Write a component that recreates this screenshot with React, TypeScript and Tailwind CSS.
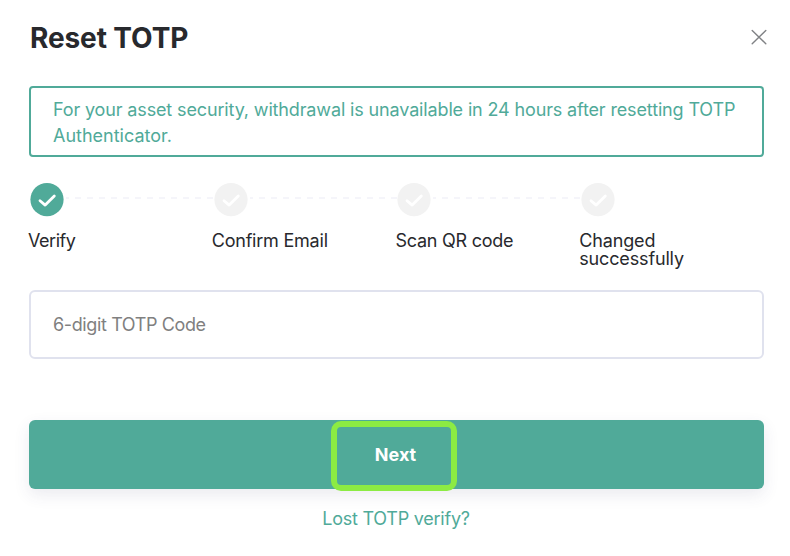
const steps = [
    { label: "Verify", done: true, className: "tracking-[-0.45px]" },
    { label: "Confirm Email", done: false, className: "tracking-[-0.22px]" },
    { label: "Scan QR code", done: false, className: "tracking-[-0.25px]" },
    { label: "Changed successfully", done: false, className: "tracking-[-0.15px]" },
];

function CheckCircle({ done }: { done: boolean }) {
    return (
        <svg
            viewBox="0 0 34 34"
            className={done ? "size-[34px] shrink-0 text-[#50aa99]" : "size-[34px] shrink-0 text-[#f2f2f2]"}
            fill="none"
        >
            <circle cx="17" cy="16.6" r="16.6" fill="currentColor" />
            <path
                d="M10 17.7 15.2 22.1 24.3 12.9"
                stroke="white"
                strokeWidth="2.8"
                strokeLinecap="round"
                strokeLinejoin="round"
            />
        </svg>
    );
}

export default function App() {
    return (
        <div className="h-[556px] w-[790px] overflow-hidden bg-white pl-[29px] pr-[26px] font-[Inter,sans-serif] text-[18px] text-[#28292d]">
            <div className="flex h-[86px] justify-between">
                <h1 className="mt-[18px] whitespace-nowrap pl-px text-[28px] font-bold leading-10 tracking-[-0.1px]">Reset TOTP</h1>
                <button className="mt-[29px] -mr-[3px] size-4" aria-label="Close">
                    <svg viewBox="0 0 16 16" fill="none" stroke="#808285" strokeWidth="1.4" strokeLinecap="round">
                        <path d="M1.2 1.4 14.8 14.8M14.8 1.4 1.2 14.8" />
                    </svg>
                </button>
            </div>

            <div className="h-[71px] whitespace-nowrap rounded-[4px] border-2 border-[#50aa99] pl-[22px] pt-[9px] leading-[26px] text-[#50aa99]">
                <p className="tracking-[-0.14px]">For your asset security, withdrawal is unavailable in 24 hours after resetting TOTP</p>
                <p>Authenticator.</p>
            </div>

            {/* Steps */}
            <div className="flex h-[133px] pt-[26px]">
                {steps.map((step, i) => (
                    <div key={step.label} className="flex-1">
                        <div className="flex h-[34px] items-center pl-[0.8px]">
                            <CheckCircle done={step.done} />
                            {i < steps.length - 1 && (
                                <div className="-mt-[4px] ml-[2.2px] h-0.5 flex-1 bg-[repeating-linear-gradient(90deg,#f5f5fa_0,#f5f5fa_3px,transparent_3px,transparent_9px,#f5f5fa_9px,#f5f5fa_12px)]" />
                            )}
                        </div>
                        <p className={`mt-[15px] w-[120px] -ml-px leading-[18px] ${step.className}`}>{step.label}</p>
                    </div>
                ))}
            </div>

            <input
                className="block h-[69px] w-full rounded-[6px] border-2 border-[#e0e2ee] px-[22px] tracking-[-0.38px] placeholder:text-[#808080] placeholder:opacity-100"
                placeholder="6-digit TOTP Code"
            />

            <button className="relative mt-[61px] flex h-[69px] w-full items-center justify-center rounded-[6px] bg-[#50aa99] pr-0.5 font-bold text-white shadow-[0_6px_16px_rgba(60,60,110,0.1)]">
                Next
                <span className="absolute left-[302px] top-px h-[70px] w-[126px] rounded-[10px] border-[6px] border-[#8ceb43]" />
            </button>

            <div className="mt-4 pr-px text-center leading-7 tracking-[-0.24px] text-[#50aa99]">
                <a>Lost TOTP verify?</a>
            </div>
        </div>
    );
}
